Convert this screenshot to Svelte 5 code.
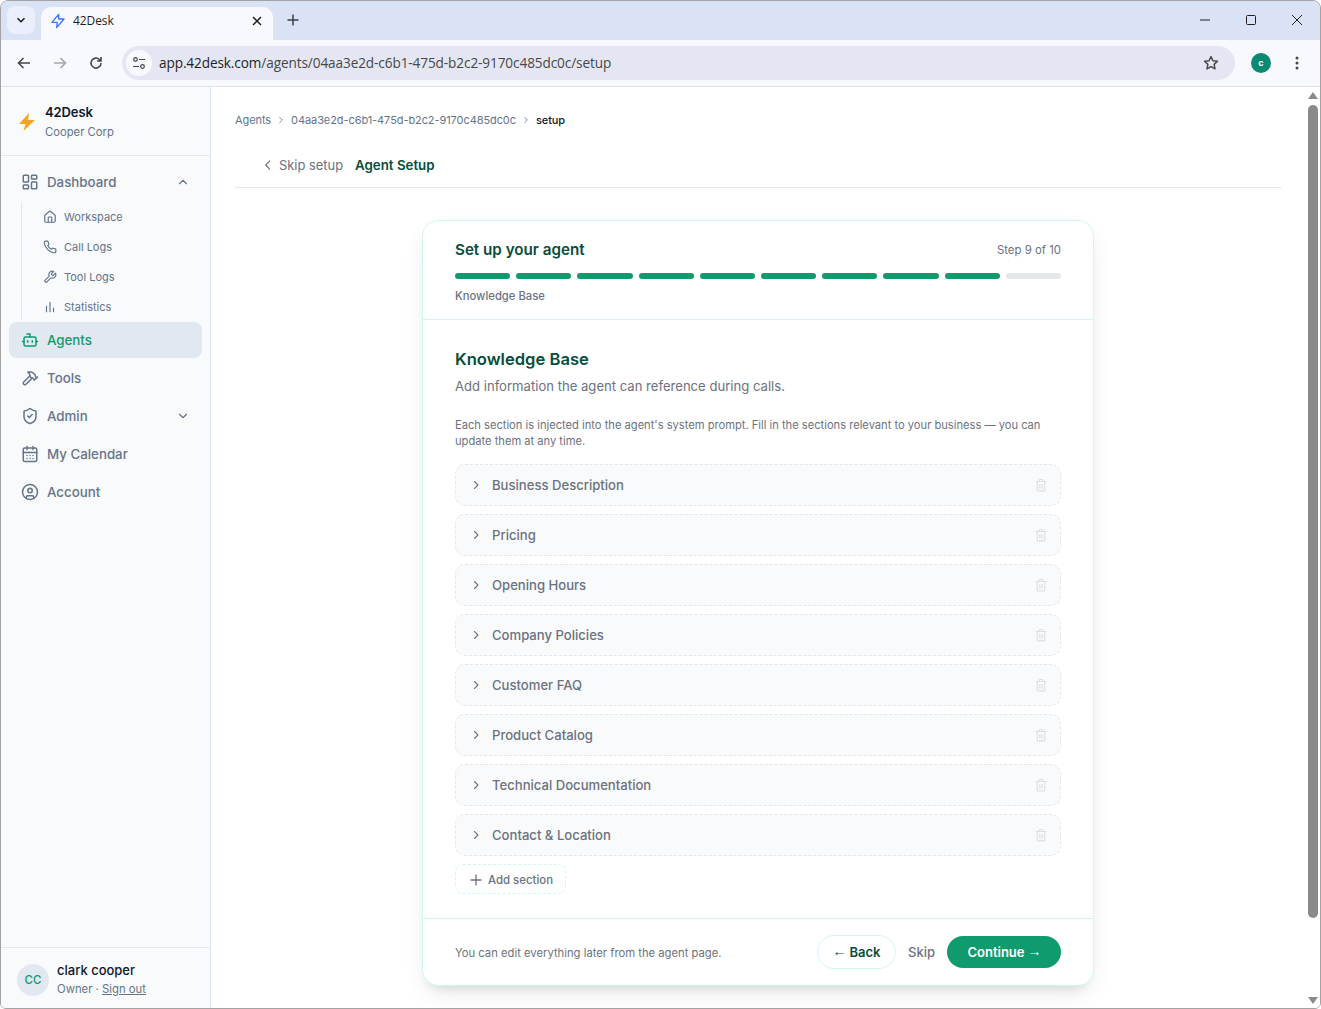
<script>
  const sections = ['Business Description','Pricing','Opening Hours','Company Policies','Customer FAQ','Product Catalog','Technical Documentation','Contact & Location'];
  const segs = [1,1,1,1,1,1,1,1,1,0];
</script>

<div class="win">
  <div class="tabstrip">
    <div class="tabsearch">
      <svg width="10" height="10" viewBox="0 0 10 10"><path d="M1.5 3.2 5 6.7l3.5-3.5" fill="none" stroke="#1f1f1f" stroke-width="1.6"/></svg>
    </div>
    <div class="tab">
      <svg width="16" height="16" viewBox="0 0 24 24" fill="none" stroke="#3b78e7" stroke-width="2" stroke-linejoin="round"><path d="M13 2 3 14h8l-1 8 11-13h-8l0-7z"/></svg>
      <span class="tabtitle">42Desk</span>
      <svg class="tabx" width="10" height="10" viewBox="0 0 10 10"><path d="M1 1l8 8M9 1 1 9" stroke="#1f1f1f" stroke-width="1.5"/></svg>
    </div>
    <svg class="newtab" width="12" height="12" viewBox="0 0 12 12"><path d="M6 .5v11M.5 6h11" stroke="#3c4043" stroke-width="1.5"/></svg>
    <div class="winctl">
      <svg width="12" height="12" viewBox="0 0 12 12"><path d="M1 6h10" stroke="#1f1f1f"/></svg>
      <svg width="12" height="12" viewBox="0 0 12 12"><rect x="1.5" y="1.5" width="9" height="9" rx="1" fill="none" stroke="#1f1f1f"/></svg>
      <svg width="12" height="12" viewBox="0 0 12 12"><path d="M1 1l10 10M11 1 1 11" stroke="#1f1f1f"/></svg>
    </div>
  </div>
  <div class="toolbar">
    <svg width="16" height="16" viewBox="0 0 16 16" fill="none" stroke="#474747" stroke-width="1.6"><path d="M14 8H2.5M7.5 3 2.5 8l5 5"/></svg>
    <svg class="fwd" width="16" height="16" viewBox="0 0 16 16" fill="none" stroke="#a6a8ad" stroke-width="1.6"><path d="M2 8h11.5M8.5 3l5 5-5 5"/></svg>
    <svg width="16" height="16" viewBox="0 0 16 16" fill="none" stroke="#474747" stroke-width="1.6"><path d="M13 8a5 5 0 1 1-1.5-3.5L13 6M13 2v4H9"/></svg>
    <div class="omni">
      <div class="siteinfo">
        <svg width="14" height="14" viewBox="0 0 14 14" fill="none" stroke="#474747" stroke-width="1.2"><circle cx="3.5" cy="3.5" r="1.8"/><path d="M7 3.5h6M1 10.5h6"/><circle cx="10.5" cy="10.5" r="1.8"/></svg>
      </div>
      <span class="url"><span class="host">app.42desk.com</span>/agents/04aa3e2d-c6b1-475d-b2c2-9170c485dc0c/setup</span>
      <svg class="star" width="16" height="16" viewBox="0 0 24 24" fill="none" stroke="#474747" stroke-width="2.2" stroke-linejoin="round"><path d="m12 2.5 2.9 6.2 6.8.8-5 4.6 1.3 6.7-6-3.4-6 3.4 1.3-6.7-5-4.6 6.8-.8z"/></svg>
    </div>
    <div class="profile">c</div>
    <svg class="dots" width="4" height="14" viewBox="0 0 4 14" fill="#474747"><circle cx="2" cy="2" r="1.5"/><circle cx="2" cy="7" r="1.5"/><circle cx="2" cy="12" r="1.5"/></svg>
  </div>

  <div class="page">
    <aside class="side">
      <div class="brand">
        <svg width="18" height="20" viewBox="0 0 18 20" fill="#f5a524"><path d="M11 1 1 12h6.500L5.500 19 17 8h-7z"/></svg>
        <div>
          <div class="bname">42Desk</div>
          <div class="bsub">Cooper Corp</div>
        </div>
      </div>
      <nav class="nav">
        <div class="item">
          <svg class="ico" viewBox="0 0 24 24"><rect x="3" y="3" width="7" height="9" rx="1"/><rect x="14" y="3" width="7" height="5" rx="1"/><rect x="14" y="12" width="7" height="9" rx="1"/><rect x="3" y="16" width="7" height="5" rx="1"/></svg>
          <span>Dashboard</span>
          <svg class="chev" viewBox="0 0 24 24"><path d="m6 15 6-6 6 6"/></svg>
        </div>
        <div class="sub">
          <div class="subitem">
            <svg class="sico" viewBox="0 0 24 24"><path d="M15 21v-8a1 1 0 0 0-1-1h-4a1 1 0 0 0-1 1v8"/><path d="M3 10a2 2 0 0 1 .7-1.500l7-6a2 2 0 0 1 2.600 0l7 6A2 2 0 0 1 21 10v9a2 2 0 0 1-2 2H5a2 2 0 0 1-2-2z"/></svg>
            <span>Workspace</span>
          </div>
          <div class="subitem">
            <svg class="sico" viewBox="0 0 24 24"><path d="M22 16.900v3a2 2 0 0 1-2.200 2 19.800 19.800 0 0 1-8.600-3.100 19.500 19.500 0 0 1-6-6A19.800 19.800 0 0 1 2.100 4.200 2 2 0 0 1 4.100 2h3a2 2 0 0 1 2 1.700c.1 1 .4 1.900.7 2.800a2 2 0 0 1-.5 2.100L8.100 9.900a16 16 0 0 0 6 6l1.300-1.300a2 2 0 0 1 2.100-.4c.9.300 1.800.6 2.800.7a2 2 0 0 1 1.700 2z"/></svg>
            <span>Call Logs</span>
          </div>
          <div class="subitem">
            <svg class="sico" viewBox="0 0 24 24"><path d="M14.700 6.300a1 1 0 0 0 0 1.400l1.600 1.600a1 1 0 0 0 1.400 0l3.800-3.800a6 6 0 0 1-7.900 7.900l-6.900 6.900a2.100 2.100 0 0 1-3-3l6.900-6.900a6 6 0 0 1 7.900-7.900z"/></svg>
            <span>Tool Logs</span>
          </div>
          <div class="subitem">
            <svg class="sico" viewBox="0 0 24 24"><path d="M12 20V4M18 20v-6M6 20v-9"/></svg>
            <span>Statistics</span>
          </div>
        </div>
        <div class="item active">
          <svg class="ico" viewBox="0 0 24 24"><path d="M12 8V4H8"/><rect x="4" y="8" width="16" height="12" rx="2"/><path d="M2 14h2M20 14h2M15 13v2M9 13v2"/></svg>
          <span>Agents</span>
        </div>
        <div class="item">
          <svg class="ico" viewBox="0 0 24 24"><path d="m15 12-8.400 8.400a2.100 2.100 0 0 1-3-3L12 9"/><path d="M17.600 15 22 10.600"/><path d="m20.900 11.700-1.300-1.300c-.4-.4-.6-.9-.6-1.400v-.9l-2.500-2.500a5.600 5.600 0 0 0-4-1.600H9l.9.800a6.200 6.200 0 0 1 2.100 4.600V10l2 2h.9c.5 0 1 .2 1.400.6l1.300 1.300"/></svg>
          <span>Tools</span>
        </div>
        <div class="item">
          <svg class="ico" viewBox="0 0 24 24"><path d="M20 13c0 5-3.500 7.500-7.700 9a1 1 0 0 1-.6 0C7.500 20.500 4 18 4 13V6a1 1 0 0 1 1-1c2 0 4.500-1.200 6.200-2.700a1.200 1.200 0 0 1 1.600 0C14.500 3.800 17 5 19 5a1 1 0 0 1 1 1z"/><path d="m9 12 2 2 4-4"/></svg>
          <span>Admin</span>
          <svg class="chev" viewBox="0 0 24 24"><path d="m6 9 6 6 6-6"/></svg>
        </div>
        <div class="item">
          <svg class="ico" viewBox="0 0 24 24"><path d="M8 2v4M16 2v4"/><rect x="3" y="4" width="18" height="18" rx="2"/><path d="M3 10h18M8 14h.01M12 14h.01M16 14h.01M8 18h.01M12 18h.01M16 18h.01"/></svg>
          <span>My Calendar</span>
        </div>
        <div class="item">
          <svg class="ico" viewBox="0 0 24 24"><circle cx="12" cy="12" r="10"/><circle cx="12" cy="10" r="3"/><path d="M7 20.700V19a2 2 0 0 1 2-2h6a2 2 0 0 1 2 2v1.700"/></svg>
          <span>Account</span>
        </div>
      </nav>
      <div class="user">
        <div class="avatar">CC</div>
        <div>
          <div class="uname">clark cooper</div>
          <div class="urole">Owner · <span class="signout">Sign out</span></div>
        </div>
      </div>
    </aside>

    <main class="main">
      <div class="crumbs">
        <span>Agents</span>
        <svg class="cr" viewBox="0 0 24 24"><path d="m9 6 6 6-6 6"/></svg>
        <span>04aa3e2d-c6b1-475d-b2c2-9170c485dc0c</span>
        <svg class="cr" viewBox="0 0 24 24"><path d="m9 6 6 6-6 6"/></svg>
        <span class="cur">setup</span>
      </div>
      <div class="pagehead">
        <svg class="back" viewBox="0 0 24 24"><path d="m15 5-7 7 7 7"/></svg>
        <span class="skipsetup">Skip setup</span>
        <span class="agentsetup">Agent Setup</span>
      </div>

      <section class="card">
        <header class="chead">
          <div class="ctop">
            <span class="ctitle">Set up your agent</span>
            <span class="step">Step 9 of 10</span>
          </div>
          <div class="segs">
            {#each segs as s}
              <div class="seg" class:on={s}></div>
            {/each}
          </div>
          <div class="steplabel">Knowledge Base</div>
        </header>
        <div class="cbody">
          <h2>Knowledge Base</h2>
          <p class="lead">Add information the agent can reference during calls.</p>
          <p class="note">Each section is injected into the agent's system prompt. Fill in the sections relevant to your business — you can update them at any time.</p>
          <div class="rows">
            {#each sections as s}
              <div class="row">
                <svg class="rchev" viewBox="0 0 24 24"><path d="m9 5 7 7-7 7"/></svg>
                <span class="rlabel">{s}</span>
                <svg class="trash" viewBox="0 0 24 24"><path d="M3.500 6h17M9 6V3.500a1 1 0 0 1 1-1h4a1 1 0 0 1 1 1V6M5.500 6v14a2 2 0 0 0 2 2h9a2 2 0 0 0 2-2V6M10 11v6.500M14 11v6.500"/></svg>
              </div>
            {/each}
          </div>
          <div class="addsec">
            <svg width="12" height="12" viewBox="0 0 12 12"><path d="M6 1v10M1 6h10" stroke="#6b7280" stroke-width="1.300" stroke-linecap="round"/></svg>
            <span>Add section</span>
          </div>
        </div>
        <footer class="cfoot">
          <span class="fnote">You can edit everything later from the agent page.</span>
          <div class="factions">
            <div class="btn-back"><span class="arrow">←</span> Back</div>
            <div class="btn-skip">Skip</div>
            <div class="btn-go">Continue <span class="arrow">→</span></div>
          </div>
        </footer>
      </section>
    </main>

    <div class="scroll">
      <div class="sup"></div>
      <div class="sthumb"></div>
      <div class="sdown"></div>
    </div>
  </div>
</div>

<style>
  :global(body) { margin: 0; background: #fff; overflow: hidden; }
  .win {
    box-sizing: border-box; width: 1321px; height: 1009px; display: flex; flex-direction: column;
    border: 1px solid #a3a3a3; border-radius: 8px 8px 6px 6px; overflow: hidden;
    font-family: Inter, "Noto Sans", sans-serif; color: #1f2937;
  }
  .tabstrip { height: 39px; flex: none; background: #dae2f6; display: flex; align-items: flex-start; position: relative; padding-left: 6px; }
  .tabsearch { width: 28px; height: 28px; margin-top: 5px; border-radius: 8px; background: #eaeffb; display: flex; align-items: center; justify-content: center; }
  .tab {
    width: 232px; height: 33px; margin: 6px 0 0 6px; background: #f8f9fe; border-radius: 10px 10px 0 0;
    display: flex; align-items: center; padding: 0 11px 6px 9px; box-sizing: border-box;
  }
  .tabtitle { font: 12px "Open Sans", sans-serif; margin-left: 7px; color: #1f1f1f; flex: 1; letter-spacing: -0.1px; }
  .tabx { flex: none; }
  .newtab { margin: 13px 0 0 14px; }
  .winctl { margin-left: auto; display: flex; gap: 34px; padding: 13px 17px 0 0; }
  .toolbar { height: 47px; flex: none; background: #f8f9fe; border-bottom: 1px solid #dfe1ea; box-sizing: border-box; display: flex; align-items: center; padding: 0 16px 1px 15px; }
  .fwd { margin-left: 20px; }
  .toolbar > svg:nth-child(3) { margin-left: 20px; }
  .omni { margin-left: 18px; width: 1113px; height: 34px; background: #e4e7f3; border-radius: 17px; display: flex; align-items: center; padding-left: 3px; box-sizing: border-box; }
  .siteinfo { width: 26px; height: 26px; background: #f8f9fe; border-radius: 50%; margin-left: 1px; display: flex; align-items: center; justify-content: center; }
  .url { font: 13.6px "Open Sans", sans-serif; color: #474747; margin-left: 7px; flex: 1; letter-spacing: -0.1px; }
  .host { color: #1f1f1f; }
  .star { margin-right: 16px; }
  .profile { width: 20px; height: 20px; border-radius: 50%; background: #0b8a72; color: #fff; font: 700 9px Inter, sans-serif; display: flex; align-items: center; justify-content: center; margin-left: 16px; }
  .dots { margin-left: 24px; }

  .page { flex: 1; min-height: 0; display: flex; background: #fff; }
  .side { width: 210px; flex: none; box-sizing: border-box; background: #f8fafc; border-right: 1px solid #e2e8f0; display: flex; flex-direction: column; }
  .brand { height: 69px; box-sizing: border-box; border-bottom: 1px solid #e2e8f0; display: flex; align-items: center; gap: 9px; padding: 1px 0 0 17px; }
  .bname { font-size: 13px; font-weight: 600; color: #0f172a; line-height: 20px; letter-spacing: -0.1px; }
  .bsub { font-size: 11.25px; color: #64748b; line-height: 19px; padding-top: 1px; }
  .nav { padding: 8px 8px 0; flex: 1; }
  .item { height: 36px; margin-bottom: 2px; display: flex; align-items: center; gap: 8px; padding: 0 12px; border-radius: 8px; font-size: 13.3px; font-weight: 500; color: #64748b; }
  .item span { flex: 1; }
  .active { background: #e2e8f0; color: #0f9b6e; }
  .ico { width: 18px; height: 18px; fill: none; stroke: currentColor; stroke-width: 2; stroke-linecap: round; stroke-linejoin: round; flex: none; }
  .chev { width: 14px; height: 14px; fill: none; stroke: #64748b; stroke-width: 2; stroke-linecap: round; stroke-linejoin: round; }
  .sub { margin: 0 0 2px 12px; border-left: 1px solid #e2e8f0; height: 118px; padding-left: 21px; display: flex; flex-direction: column; }
  .subitem { height: 30px; flex: none; display: flex; align-items: center; gap: 7px; font-size: 11px; color: #64748b; }
  .sico { width: 14px; height: 14px; fill: none; stroke: #64748b; stroke-width: 2; stroke-linecap: round; stroke-linejoin: round; flex: none; }
  .user { height: 61px; box-sizing: border-box; border-top: 1px solid #e2e8f0; display: flex; align-items: center; gap: 8px; padding: 3px 0 0 16px; }
  .avatar { width: 32px; height: 32px; border-radius: 50%; background: #e2e8f0; color: #0f9b6e; font-size: 11.5px; font-weight: 500; display: flex; align-items: center; justify-content: center; }
  .uname { font-size: 13px; font-weight: 500; color: #0f172a; line-height: 18px; }
  .urole { font-size: 11.3px; color: #64748b; line-height: 19px; margin-top: 1px; }
  .signout { text-decoration: underline; }

  .main { flex: 1; min-width: 0; padding: 0 24px; box-sizing: border-box; display: flex; flex-direction: column; }
  .crumbs { height: 24px; margin-top: 21px; display: flex; align-items: center; gap: 5px; font-size: 11px; color: #64748b; letter-spacing: -0.08px; flex: none; }
  .cur { color: #0f172a; font-weight: 500; }
  .cr { width: 10px; height: 10px; fill: none; stroke: #64748b; stroke-width: 2; stroke-linecap: round; stroke-linejoin: round; }
  .pagehead { height: 56px; box-sizing: border-box; border-bottom: 1px solid #e5e7eb; display: flex; align-items: center; padding: 10px 0 0 25px; margin-bottom: 32px; flex: none; }
  .back { width: 14px; height: 14px; fill: none; stroke: #6b7280; stroke-width: 2; stroke-linecap: round; stroke-linejoin: round; margin: 0 4px 0 1px; }
  .skipsetup { font-size: 12.9px; color: #6b7280; padding-top: 1px; }
  .agentsetup { font-size: 13.3px; font-weight: 600; color: #064e3b; margin-left: 12px; }

  .card { width: 672px; height: 766px; box-sizing: border-box; margin: 0 auto; border: 1px solid #d1fae5; border-radius: 16px; background: #fff; box-shadow: 0 10px 25px -5px rgba(0,0,0,.1), 0 8px 10px -6px rgba(0,0,0,.1); display: flex; flex-direction: column; flex: none; }
  .chead { padding: 18px 32px 0; height: 99px; box-sizing: border-box; border-bottom: 1px solid #d1fae5; flex: none; }
  .ctop { display: flex; justify-content: space-between; align-items: center; height: 20px; }
  .ctitle { font-size: 15.2px; font-weight: 600; color: #064e3b; }
  .step { font-size: 11.4px; color: #6b7280; margin-top: 1px; }
  .segs { display: flex; gap: 6px; margin-top: 14px; }
  .seg { flex: 1; height: 6px; border-radius: 3px; background: #e5e7eb; }
  .seg.on { background: #0f9b6e; }
  .steplabel { font-size: 11.25px; font-weight: 500; color: #6b7280; margin-top: 9px; line-height: 16px; }
  .cbody { flex: 1; padding: 27px 32px 0; box-sizing: border-box; }
  h2 { margin: 0; font-size: 16.6px; font-weight: 600; color: #064e3b; line-height: 24px; }
  .lead { margin: 5px 0 0; font-size: 13.1px; color: #6b7280; line-height: 20px; }
  .note { margin: 21px 0 0; font-size: 11.15px; color: #6b7280; line-height: 16px; }
  .rows { margin-top: 15px; display: flex; flex-direction: column; gap: 8px; }
  .row { height: 42px; box-sizing: border-box; border: 1px dashed #e5e7eb; border-radius: 10px; background: #f9fafb; display: flex; align-items: center; padding: 0 12px 0 14px; }
  .rchev { width: 12px; height: 12px; fill: none; stroke: #6b7280; stroke-width: 2.200; stroke-linecap: round; stroke-linejoin: round; flex: none; }
  .rlabel { flex: 1; margin-left: 10px; font-size: 13.1px; font-weight: 500; color: #6b7280; }
  .trash { width: 14px; height: 14px; fill: none; stroke: #dcdfe4; stroke-width: 2; stroke-linecap: round; stroke-linejoin: round; flex: none; }
  .addsec { margin-top: 8px; width: 111px; height: 30px; box-sizing: border-box; border: 1px dashed #d1fae5; border-radius: 8px; display: flex; align-items: center; gap: 6px; padding: 1px 0 0 14px; font-size: 11.4px; font-weight: 500; color: #6b7280; }
  .cfoot { height: 67px; box-sizing: border-box; border-top: 1px solid #d1fae5; flex: none; display: flex; align-items: center; justify-content: space-between; padding: 0 32px; }
  .fnote { font-size: 11.25px; color: #6b7280; padding-top: 1px; }
  .factions { display: flex; align-items: center; }
  .btn-back { width: 79px; height: 34px; box-sizing: border-box; border: 1px solid #d1fae5; border-radius: 17px; color: #064e3b; font-size: 13px; font-weight: 600; display: flex; align-items: center; justify-content: center; gap: 3px; }
  .btn-skip { margin-left: 12px; font-size: 13px; font-weight: 500; color: #6b7280; }
  .btn-go { margin-left: 12px; width: 114px; height: 32px; background: #0f9b6e; border-radius: 16px; color: #fff; font-size: 13px; font-weight: 600; display: flex; align-items: center; justify-content: center; gap: 3px; padding-left: 1px; box-sizing: border-box; }
  .arrow { font-family: "Liberation Sans", sans-serif; font-weight: 400; font-size: 14px; line-height: 1; position: relative; top: -1.500px; }

  .scroll { width: 15px; flex: none; background: #fff; position: relative; display: flex; flex-direction: column; align-items: center; }
  .sup { width: 0; height: 0; margin-top: 5px; border: 5px solid transparent; border-top: 0; border-bottom: 7px solid #8a8a8a; }
  .sthumb { width: 10px; height: 813px; margin-top: 6px; border-radius: 5px; background: #8a8a8a; }
  .sdown { width: 0; height: 0; margin-top: auto; margin-bottom: 4px; border: 5px solid transparent; border-bottom: 0; border-top: 7px solid #8a8a8a; }
</style>
